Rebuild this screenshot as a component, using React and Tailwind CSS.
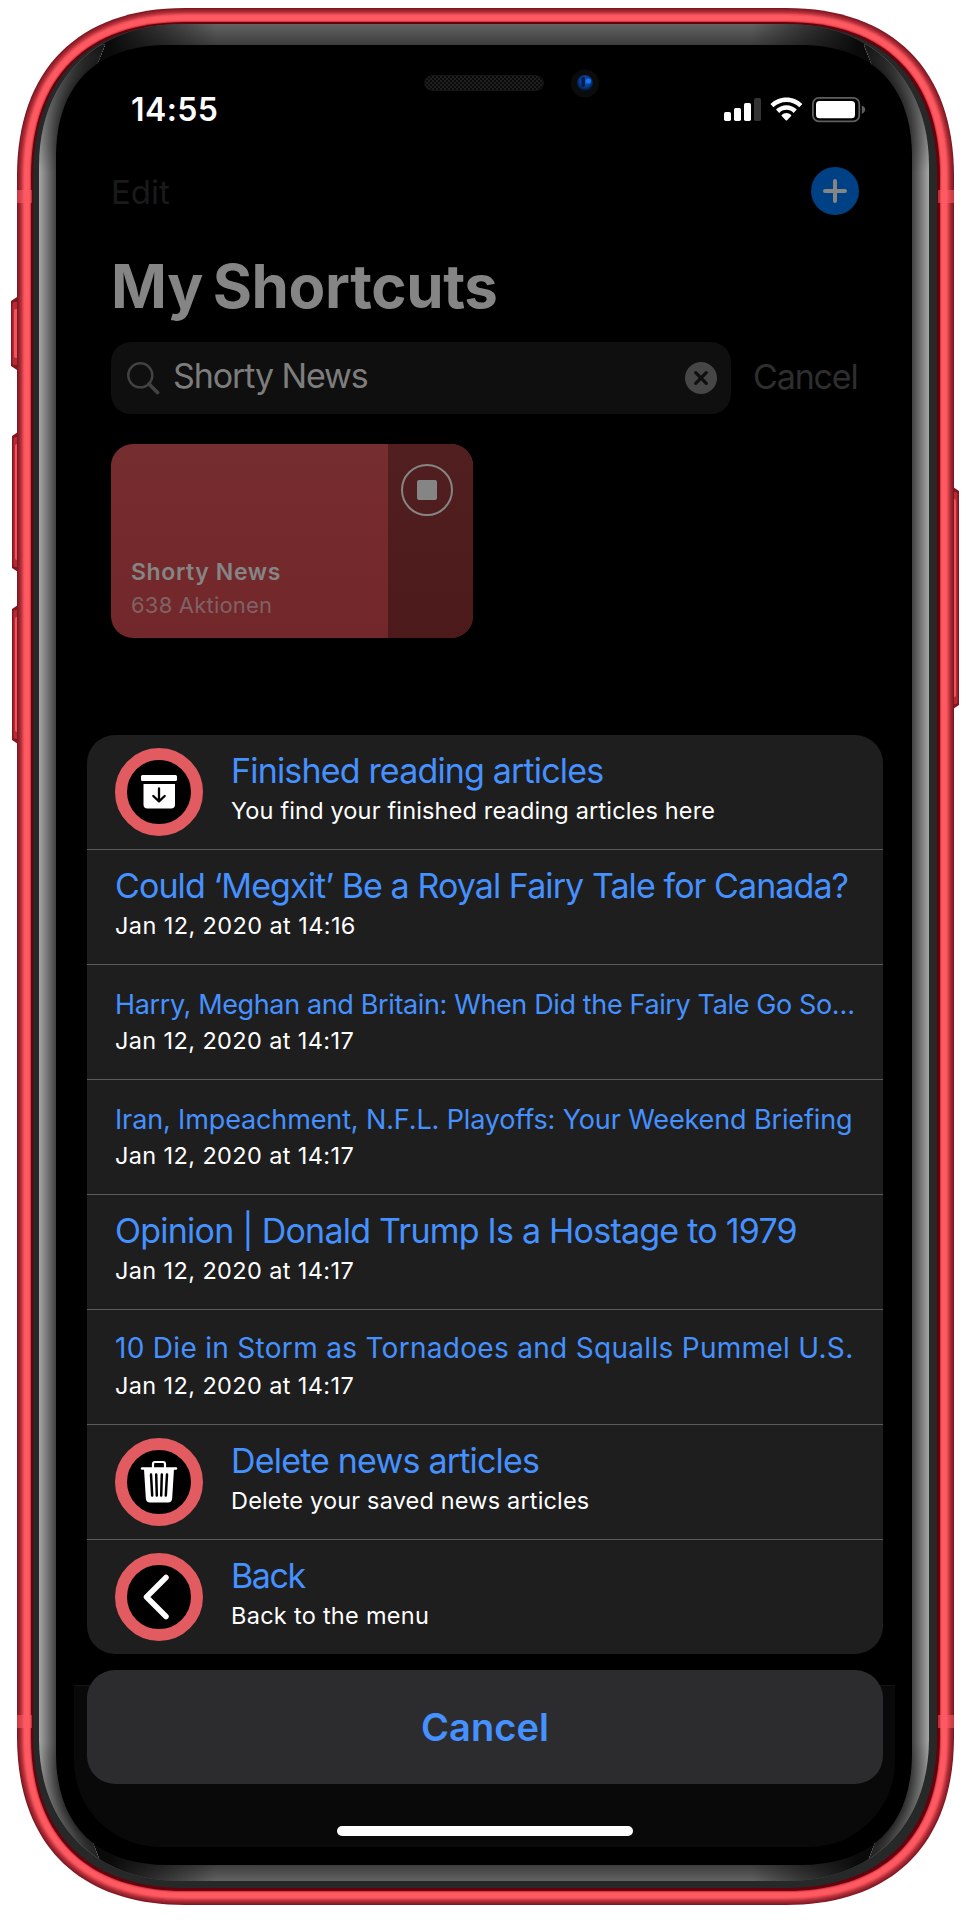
import React from "react";

/* Continuous-corner outline. `l` is where the corner starts, `m` how far its middle sits from the box corner. */
function outline(x0, y0, x1, y1, l, m) {
  const c = (m - 0.125 * l) / 0.375;
  return [
    `M${x0} ${y0 + l}C${x0} ${y0 + c} ${x0 + c} ${y0} ${x0 + l} ${y0}`,
    `H${x1 - l}C${x1 - c} ${y0} ${x1} ${y0 + c} ${x1} ${y0 + l}`,
    `V${y1 - l}C${x1} ${y1 - c} ${x1 - c} ${y1} ${x1 - l} ${y1}`,
    `H${x0 + l}C${x0 + c} ${y1} ${x0} ${y1 - c} ${x0} ${y1 - l}Z`,
  ].join("");
}

const BODY = [
  [0, "#7d1822"], [1, "#8e1f29"], [2, "#9b252f"], [3, "#ab2b35"], [4, "#bd343e"],
  [5, "#d44049"], [6, "#ea4d56"], [7, "#fb565f"], [8, "#ff5a62"], [12, "#fa5059"], [13, "#d33c46"], [14, "#65000c"],
];

const BEVEL = Array.from({ length: 17 }, (_, i) => i);

function shade(from, to, t) {
  const v = Math.round(from + (to - from) * t);
  return `rgb(${v},${v},${v})`;
}

function bevelPath(i) {
  const t = i / 17;
  return outline(39 + 17 * t, 24 + 21 * t, 929 - 17 * t, 1881 - 16 * t, 142 - 30 * t, 39 - 10 * t);
}

function SideButton({ x, y, h, flip }) {
  return (
    <g transform={flip ? `translate(${x + 8} ${y}) scale(-1 1)` : `translate(${x} ${y})`}>
      <path d={`M0 4L6 0H12V${h}H6L0 ${h - 4}Z`} fill="#84141e" />
      <rect x="1.5" y="5" width="6" height={h - 10} rx="2" fill="#b52b35" />
      <rect x="3" y="12" width="4" height={h - 24} rx="2" fill="#f5525b" />
    </g>
  );
}

function DeviceFrame() {
  return (
    <svg className="absolute inset-0" width="970" height="1923" viewBox="0 0 970 1923" aria-hidden="true">
      <defs>
        <clipPath id="sides">
          <path d="M0 0L105 45L62 150V1765L102 1866L0 1923ZM970 0L864 45L906 150V1765L866 1866L970 1923Z" />
        </clipPath>
        <linearGradient id="endFade" x1="0" x2="1" y1="0" y2="0">
          <stop offset="0" stopColor="#0a0a0a" />
          <stop offset="0.08" stopColor="#0a0a0a" />
          <stop offset="0.2" stopColor="#0a0a0a" stopOpacity="0" />
          <stop offset="0.8" stopColor="#0a0a0a" stopOpacity="0" />
          <stop offset="0.92" stopColor="#0a0a0a" />
          <stop offset="1" stopColor="#0a0a0a" />
        </linearGradient>
        <linearGradient id="sideFade" x1="0" x2="0" y1="24" y2="1881" gradientUnits="userSpaceOnUse">
          <stop offset="0" stopColor="#111" />
          <stop offset="0.013" stopColor="#111" stopOpacity="0.95" />
          <stop offset="0.03" stopColor="#111" stopOpacity="0.65" />
          <stop offset="0.08" stopColor="#111" stopOpacity="0" />
          <stop offset="0.925" stopColor="#111" stopOpacity="0" />
          <stop offset="0.975" stopColor="#111" stopOpacity="0.6" />
          <stop offset="0.99" stopColor="#111" stopOpacity="0.95" />
          <stop offset="1" stopColor="#111" />
        </linearGradient>
        <pattern id="mesh" width="4" height="4" patternUnits="userSpaceOnUse">
          <rect width="4" height="4" fill="#0a0a0a" />
          <rect width="2" height="2" fill="#1f1f1f" />
          <rect x="2" y="2" width="2" height="2" fill="#1f1f1f" />
        </pattern>
        <radialGradient id="lens" cx="0.5" cy="0.4" r="0.6">
          <stop offset="0" stopColor="#0a5fd0" />
          <stop offset="0.6" stopColor="#083a8a" />
          <stop offset="1" stopColor="#020d26" />
        </radialGradient>
      </defs>

      <SideButton x={11} y={297} h={73} />
      <SideButton x={12} y={432} h={140} />
      <SideButton x={12} y={605} h={139} />
      <SideButton x={951} y={487} h={222} flip />

      {BODY.map(([d, fill]) => (
        <path key={d} d={outline(17 + d, 8 + d, 954 - d, 1905 - d, 168 - d, 44 - 0.293 * d)} fill={fill} />
      ))}
      <g fill="#ff5a62" opacity="0.55">
        <rect x="17" y="190" width="15" height="13" />
        <rect x="938" y="190" width="16" height="13" />
        <rect x="17" y="1715" width="15" height="13" />
        <rect x="938" y="1715" width="16" height="13" />
      </g>
      <path d={outline(33, 24, 937, 1888, 152, 39.5)} fill="#272828" />

      {BEVEL.map((i) => (
        <path key={i} d={bevelPath(i)} fill={shade(98, 60, i / 17)} />
      ))}
      <path d={bevelPath(0)} fill="url(#endFade)" />
      <g clipPath="url(#sides)">
        {BEVEL.map((i) => (
          <path key={i} d={bevelPath(i)} fill={shade(164, 62, i / 17)} />
        ))}
        <path d={bevelPath(0)} fill="url(#sideFade)" />
      </g>
      <path d={bevelPath(17)} fill="#000" />

      <rect x="424.5" y="75.5" width="119" height="15" rx="7.5" fill="url(#mesh)" stroke="#121212" />
      <circle cx="585" cy="83.5" r="14" fill="#0b0b0c" />
      <circle cx="585" cy="83" r="8" fill="url(#lens)" />
      <rect x="581.5" y="77" width="3.5" height="10" rx="1.7" fill="#031a48" />
      <circle cx="588.5" cy="81" r="2.6" fill="#1677f2" />
    </svg>
  );
}

function StatusBar() {
  return (
    <div className="flex h-10 items-center justify-between pr-[2px] pl-5">
      <span className="text-[32px] leading-10 font-semibold tracking-[0.4px] text-white">14:55</span>
      <svg width="142" height="26" viewBox="724 97 142 26" fill="#fff">
        <rect x="724" y="112" width="7" height="9" rx="1.7" />
        <rect x="734" y="108" width="7" height="13" rx="1.7" />
        <rect x="744" y="103" width="7" height="18" rx="1.7" />
        <rect x="754" y="98" width="7" height="23" rx="1.7" fill="#333" />
        <path d="M786.4 97.4C792.7 97.4 798.3 99.9 802.4 104L799.3 107.3C796 104 791.4 102 786.4 102C781.4 102 776.8 104 773.5 107.3L770.4 104C774.5 99.9 780.1 97.4 786.4 97.4Z" />
        <path d="M786.4 105.3C790.4 105.3 794.1 106.9 796.8 109.6L793.6 112.9C791.7 111 789.2 109.8 786.4 109.8C783.6 109.8 781.1 111 779.2 112.9L776 109.6C778.7 106.9 782.4 105.3 786.4 105.3Z" />
        <path d="M786.4 112.9C788.2 112.9 789.9 113.6 791.1 114.9C791.4 115.2 791.4 115.6 791.1 115.9L787.1 120.3C786.7 120.7 786.1 120.7 785.7 120.3L781.7 115.9C781.4 115.6 781.4 115.2 781.7 114.9C782.9 113.6 784.6 112.9 786.4 112.9Z" />
        <rect x="812.9" y="97.9" width="46.4" height="23.4" rx="6" fill="none" stroke="#5e5e5e" strokeWidth="1.8" />
        <rect x="816" y="101" width="39" height="17.3" rx="3.5" />
        <path d="M861.8 105.5C864 106.2 865.2 107.8 865.2 109.6C865.2 111.4 864 113 861.8 113.7Z" fill="#5e5e5e" />
      </svg>
    </div>
  );
}

function ArchiveIcon() {
  return (
    <svg width="64" height="64" viewBox="0 0 64 64" fill="#fff">
      <rect x="14" y="15" width="36" height="6" rx="1.5" />
      <path d="M16.5 24H48V44.5a4 4 0 0 1-4 4H20.5a4 4 0 0 1-4-4Z" />
      <path d="M32 28.5V41M26.3 36L32 41.3L37.7 36" fill="none" stroke="#000" strokeWidth="2.3" strokeLinecap="round" strokeLinejoin="round" />
    </svg>
  );
}

function TrashIcon() {
  return (
    <svg width="64" height="64" viewBox="0 0 64 64" fill="none" stroke="#fff" strokeLinecap="round" strokeLinejoin="round">
      <path d="M26 18V14Q26 12 28 12H36Q38 12 38 14V18" strokeWidth="2.2" />
      <path d="M15 18.5H49" strokeWidth="2.4" />
      <path d="M17 18.5H47L45.2 48Q44.9 52.5 41 52.5H23Q19.1 52.5 18.8 48Z" fill="#fff" stroke="none" />
      <path d="M24 24.5L25.2 45.5M29.2 24.5L29.8 45.5M34.8 24.5L34.2 45.5M40 24.5L38.8 45.5" stroke="#000" strokeWidth="2.5" />
    </svg>
  );
}

function BackIcon() {
  return (
    <svg width="64" height="64" viewBox="0 0 64 64" fill="none" stroke="#fff" strokeWidth="5.5" strokeLinecap="round" strokeLinejoin="round">
      <path d="M39 12.5L19.500 32L39 51.5" />
    </svg>
  );
}

const ROWS = [
  { title: "Finished reading articles", type: "text-[34px] tracking-[-0.83px]", sub: "You find your finished reading articles here", subType: "tracking-[0.16px]", Icon: ArchiveIcon },
  { title: "Could ‘Megxit’ Be a Royal Fairy Tale for Canada?", type: "text-[34px] tracking-[-0.92px]", sub: "Jan 12, 2020 at 14:16", subType: "tracking-[0.4px]" },
  { title: "Harry, Meghan and Britain: When Did the Fairy Tale Go So…", type: "pt-[6px] text-[27px] tracking-[-0.37px]", sub: "Jan 12, 2020 at 14:17", subType: "tracking-[0.38px]" },
  { title: "Iran, Impeachment, N.F.L. Playoffs: Your Weekend Briefing", type: "pt-[6px] text-[27px] tracking-[-0.13px]", sub: "Jan 12, 2020 at 14:17", subType: "tracking-[0.38px]" },
  { title: "Opinion | Donald Trump Is a Hostage to 1979", type: "text-[34px] tracking-[-0.76px]", sub: "Jan 12, 2020 at 14:17", subType: "tracking-[0.38px]" },
  { title: "10 Die in Storm as Tornadoes and Squalls Pummel U.S.", type: "pt-[4px] text-[28px] tracking-[0.3px]", sub: "Jan 12, 2020 at 14:17", subType: "tracking-[0.38px]" },
  { title: "Delete news articles", type: "text-[34px] tracking-[-0.82px]", sub: "Delete your saved news articles", subType: "tracking-[0.17px]", Icon: TrashIcon },
  { title: "Back", type: "text-[34px] tracking-[-1.4px]", sub: "Back to the menu", subType: "tracking-[0.28px]", Icon: BackIcon },
];

function ActionRow({ title, type, sub, subType, Icon }) {
  return (
    <li className="flex h-[115px] border-b border-[#5c5c5e] pl-7 whitespace-nowrap last:h-[114px] last:border-b-0">
      {Icon && (
        <span className="mt-[13px] mr-7 size-[88px] shrink-0 rounded-full border-12 border-[#e15b60] bg-black">
          <Icon />
        </span>
      )}
      <div className="flex flex-col pt-4">
        <span className={`flex h-10 items-center leading-none text-[#4591ff] ${type}`}>{title}</span>
        <span className={`mt-[5.5px] text-[23.5px] leading-7 text-white ${subType}`}>{sub}</span>
      </div>
    </li>
  );
}

export default function App() {
  return (
    <div className="relative h-[1923px] w-[970px] overflow-hidden bg-white font-['Inter',sans-serif]">
      <DeviceFrame />
      <div className="absolute top-[1685px] left-[74px] h-[162px] w-[821px] rounded-b-[86px] border-t border-[#141414] bg-[#090909]" />

      <main className="relative flex flex-col px-[87px] pt-[90px]">
        <div className="pr-[15px] pl-6">
          <StatusBar />

          <div className="mt-[37px] flex h-12 items-center justify-between pr-[9px]">
            <span className="pt-[2px] text-[33px] leading-none text-[#1a1a1a]">Edit</span>
            <span className="flex size-12 items-center justify-center rounded-full bg-[#004085]">
              <svg width="24" height="24" viewBox="0 0 24 24" stroke="#858585" strokeWidth="4" strokeLinecap="round">
                <path d="M12 2V22M2 12H22" />
              </svg>
            </span>
          </div>

          <h1 className="mt-[39px] text-[60px] leading-[64px] font-bold tracking-[-0.38px] [word-spacing:-4px] text-[#858585]">My Shortcuts</h1>

          <div className="mt-6 flex h-[72px]">
            <div className="flex w-[620px] items-center rounded-[20px] bg-[#0f0f0f] pr-[14px] pl-4">
              <svg width="33" height="33" viewBox="0 0 33 33" fill="none" stroke="#424242" strokeLinecap="round">
                <circle cx="13.3" cy="13.3" r="12" strokeWidth="2.5" />
                <path d="M22 22L30.500 30.500" strokeWidth="3.8" />
              </svg>
              <span className="ml-[13px] grow pb-1 text-[34px] leading-10 tracking-[-1.1px] text-[#7d7d7d]">Shorty News</span>
              <svg width="32" height="32" viewBox="0 0 32 32">
                <circle cx="16" cy="16" r="16" fill="#464646" />
                <path d="M10.7 10.7L21.3 21.3M21.3 10.7L10.7 21.3" stroke="#0f0f0f" strokeWidth="3.2" strokeLinecap="round" />
              </svg>
            </div>
            <span className="ml-[22px] flex items-center pb-1 text-[34px] tracking-[-1.15px] text-[#2e2e2e]">Cancel</span>
          </div>

          <div className="mt-[30px] flex h-[194px] w-[362px] overflow-hidden rounded-[22px] bg-linear-to-b from-[#762d30] to-[#72272a]">
            <div className="flex grow flex-col justify-end pb-[18px] pl-5">
              <span className="text-[23px] leading-[30px] font-semibold tracking-[0.62px] text-[#858585]">Shorty News</span>
              <span className="mt-[3px] text-[22px] leading-[30px] tracking-[0.2px] text-[#806265]">638 Aktionen</span>
            </div>
            <div className="w-[85px] bg-linear-to-b from-[#521f20] to-[#4d1a1c] pt-5 pl-[13px]">
              <div className="flex size-[52px] items-center justify-center rounded-full border-2 border-[#858585]">
                <div className="size-5 rounded-[2px] bg-[#858585]" />
              </div>
            </div>
          </div>
        </div>

        <ul className="mt-[97px] overflow-hidden rounded-[28px] bg-[#1e1e1e]">
          {ROWS.map((row, i) => (
            <ActionRow key={i} {...row} />
          ))}
        </ul>

        <button className="mt-4 h-[114px] rounded-[28px] bg-[#2c2c2e] text-[38px] font-semibold tracking-[0.1px] text-[#4591ff]">
          Cancel
        </button>

        <div className="mt-[42px] ml-[250px] h-[10px] w-[296px] rounded-full bg-white" />
      </main>
    </div>
  );
}
